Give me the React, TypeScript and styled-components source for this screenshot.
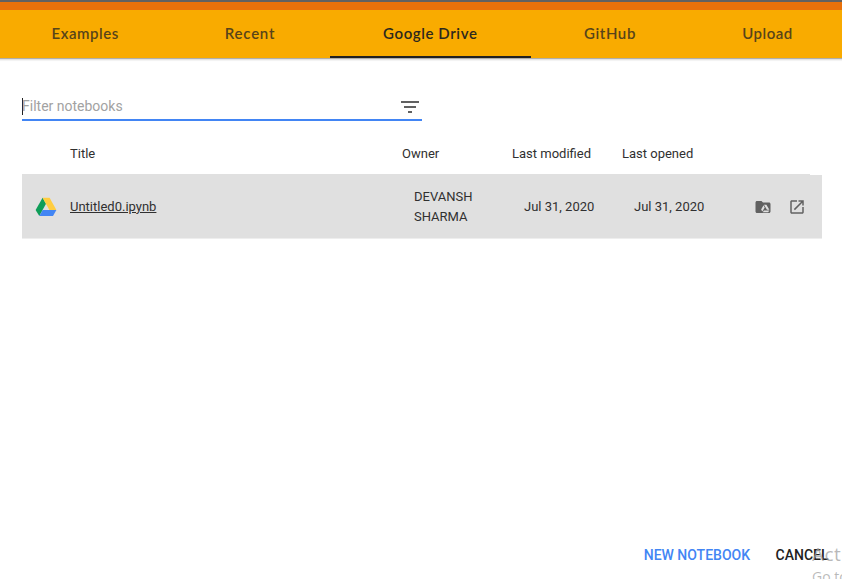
import React from 'react';
import styled, { createGlobalStyle } from 'styled-components';

const GlobalStyle = createGlobalStyle`
  * { box-sizing: border-box; }
  html, body { margin: 0; background: #fff; overflow: hidden; }
  body { font-family: Roboto, "Liberation Sans", sans-serif; color: #303030; }
`;

const Dialog = styled.main`
  position: relative;
  width: 842px;
  height: 579px;
  overflow: hidden;
  display: flex;
  flex-direction: column;
  background: #fff;
`;

const Backdrop = styled.div`
  flex: none;
  height: 10px;
  border-top: 2px solid #616161;
  background: #e8710a;
`;

const TabBar = styled.nav`
  flex: none;
  display: grid;
  grid-template-columns: 170.5px 159px 201.5px 158px 157px;
  height: 48px;
  background: #f9ab00;
  box-shadow: 0 1px 0 #b0aeaa, 0 2px 1px #e4e4e4, 0 3px 1px #f6f6f6;
`;

const Tab = styled.button<{ $active?: boolean; $spacing: number }>`
  height: 48px;
  padding: 0 0 3px;
  border: 0;
  background: transparent;
  box-shadow: ${(p) => (p.$active ? 'inset 0 -2px #212121' : 'none')};
  color: ${(p) => (p.$active ? '#2c281e' : '#57441a')};
  font: 600 15px/20px Lato, sans-serif;
  letter-spacing: ${(p) => p.$spacing}px;
  white-space: nowrap;
`;

const Content = styled.section`
  flex: 1;
  padding: 34px 20px 0 22px;
`;

const FilterField = styled.div`
  display: flex;
  align-items: center;
  justify-content: space-between;
  width: 400px;
  height: 29px;
  padding-right: 2px;
  border-bottom: 2px solid #4285f4;
`;

const FilterText = styled.div`
  height: 17px;
  border-left: 1px solid #212121;
  margin-top: 1px;
  color: #a2a2a2;
  font-size: 14px;
  line-height: 17px;
  text-indent: -1px;
`;

const HeaderRow = styled.div`
  display: grid;
  grid-template-columns: 332px 110px 110px 236px;
  align-items: center;
  width: 788px;
  height: 54px;
  padding: 11px 0 0 48px;
  border-bottom: 1px solid #e0e0e0;
  font-size: 13px;
  line-height: 15px;
`;

const NotebookRow = styled.div`
  display: grid;
  grid-template-columns: 48px 344px 110px 110px 1fr;
  align-items: center;
  height: 64px;
  border-bottom: 1px solid #eee;
  background: #e0e0e0;
  font-size: 13px;
  line-height: 20px;
`;

const DriveCell = styled.div`
  display: flex;
  padding-left: 13px;
`;

const LastCell = styled.div`
  display: flex;
  align-items: center;
  justify-content: space-between;
`;

const NotebookLink = styled.a`
  color: #303030;
  text-decoration: underline;
`;

const Actions = styled.div`
  display: flex;
  justify-content: flex-end;
  gap: 16px;
  padding: 1px 16px 0 0;
  color: #616161;
`;

const Glyph = styled.svg`
  display: block;
  fill: currentColor;
`;

const FilterGlyph = styled(Glyph)`
  color: #616161;
  margin-top: 3px;
`;

const Footer = styled.footer`
  flex: none;
  display: flex;
  justify-content: flex-end;
  gap: 25.5px;
  height: 40px;
  padding: 8px 13.5px 0 0;
`;

const FooterButton = styled.button<{ $primary?: boolean }>`
  height: 16px;
  padding: 0;
  border: 0;
  background: transparent;
  color: ${(p) => (p.$primary ? '#4285f4' : '#212121')};
  font: 500 14px/16px Roboto, sans-serif;
`;

const Activation = styled.aside`
  position: absolute;
  left: 812px;
  top: 542px;
  width: 30px;
  height: 37px;
  overflow: hidden;
  color: rgba(158, 158, 158, 0.72);
  font-family: "Open Sans", sans-serif;
  white-space: nowrap;
  pointer-events: none;
`;

const ActivationTitle = styled.div`
  font-size: 19px;
  line-height: 24px;
  letter-spacing: 0.5px;
`;

const ActivationHint = styled.div`
  font-size: 14px;
  line-height: 21px;
`;

const tabs = [
  { name: 'Examples', spacing: 0.55 },
  { name: 'Recent', spacing: 0.75 },
  { name: 'Google Drive', spacing: 0.6, active: true },
  { name: 'GitHub', spacing: 0.6 },
  { name: 'Upload', spacing: 0.5 },
];

export default function App() {
  return (
    <>
      <GlobalStyle />
      <Dialog>
        <Backdrop />
        <TabBar>
          {tabs.map((tab) => (
            <Tab key={tab.name} $active={tab.active} $spacing={tab.spacing}>
              {tab.name}
            </Tab>
          ))}
        </TabBar>
        <Content>
          <FilterField>
            <FilterText>Filter notebooks</FilterText>
            <FilterGlyph width="20" height="20" viewBox="0 0 20 20" shapeRendering="crispEdges">
              <path d="M1 4h18v2H1zM4 9h12v2H4zM8 14h4v2H8z" />
            </FilterGlyph>
          </FilterField>
          <HeaderRow>
            <span>Title</span>
            <span>Owner</span>
            <span>Last modified</span>
            <span>Last opened</span>
          </HeaderRow>
          <NotebookRow>
            <DriveCell>
              <Glyph width="22" height="20" viewBox="0 0 22 20">
                <path fill="#0f9d58" d="M7.6.7 11 6.7 4.3 19 .6 13z" />
                <path fill="#ffcd40" d="M7.6.7h7L21.4 13h-7z" />
                <path fill="#4285f4" d="M7.7 13h13.7L18 19H4.3z" />
              </Glyph>
            </DriveCell>
            <NotebookLink>Untitled0.ipynb</NotebookLink>
            <span>
              DEVANSH
              <br />
              SHARMA
            </span>
            <span>Jul 31, 2020</span>
            <LastCell>
              <span>Jul 31, 2020</span>
              <Actions>
                <Glyph width="18" height="18" viewBox="0 0 24 24">
                  <path d="M20 6h-8l-2-2H4c-1.1 0-2 .9-2 2v12c0 1.1.9 2 2 2h16c1.1 0 2-.9 2-2V8c0-1.1-.9-2-2-2z" />
                  <path
                    fill="#e0e0e0"
                    d="M13.3 9h3.2l4 6.8h-3.2zM12.7 9.8l1.6 2.8-3.2 5.4-1.6-2.8zM13.2 16.6h7.2L18.9 19h-7.2z"
                  />
                </Glyph>
                <Glyph width="18" height="18" viewBox="0 0 24 24">
                  <path d="M19 19H5V5h7V3H5c-1.1 0-2 .9-2 2v14c0 1.1.9 2 2 2h14c1.1 0 2-.9 2-2v-7h-2v7zM14 3v2h3.6l-9.8 9.8 1.4 1.4L19 6.4V10h2V3h-7z" />
                </Glyph>
              </Actions>
            </LastCell>
          </NotebookRow>
        </Content>
        <Footer>
          <FooterButton $primary>NEW NOTEBOOK</FooterButton>
          <FooterButton>CANCEL</FooterButton>
        </Footer>
        <Activation>
          <ActivationTitle>Act</ActivationTitle>
          <ActivationHint>Go to</ActivationHint>
        </Activation>
      </Dialog>
    </>
  );
}
